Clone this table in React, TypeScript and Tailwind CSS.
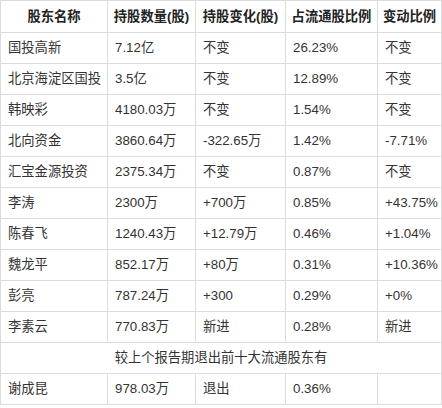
import React from "react";

const rows = [
  ["国投高新", "7.12亿", "不变", "26.23%", "不变"],
  ["北京海淀区国投", "3.5亿", "不变", "12.89%", "不变"],
  ["韩映彩", "4180.03万", "不变", "1.54%", "不变"],
  ["北向资金", "3860.64万", "-322.65万", "1.42%", "-7.71%"],
  ["汇宝金源投资", "2375.34万", "不变", "0.87%", "不变"],
  ["李涛", "2300万", "+700万", "0.85%", "+43.75%"],
  ["陈春飞", "1240.43万", "+12.79万", "0.46%", "+1.04%"],
  ["魏龙平", "852.17万", "+80万", "0.31%", "+10.36%"],
  ["彭亮", "787.24万", "+300", "0.29%", "+0%"],
  ["李素云", "770.83万", "新进", "0.28%", "新进"],
];

const headers = ["股东名称", "持股数量(股)", "持股变化(股)", "占流通股比例", "变动比例"];
const widths = ["w-[107px]", "w-[88px]", "w-[90px]", "w-[92px]", "w-[64px]"];

export default function App() {
  return (
    <div
      className="w-[442px] h-[408px] bg-white text-[#333] text-[13.3px]"
      style={{ fontFamily: '"Liberation Sans", "Noto Sans CJK SC", sans-serif' }}
    >
      <table className="border-collapse w-[441px] table-fixed">
        <thead>
          <tr className="h-[32px]">
            {headers.map((h, i) => (
              <th
                key={h}
                className={`${widths[i]} border border-[#dcdcdc] font-bold text-center px-0 whitespace-nowrap text-[#222]`}
              >
                {h}
              </th>
            ))}
          </tr>
        </thead>
        <tbody>
          {rows.map((r) => (
            <tr key={r[0]} className="h-[31px]">
              {r.map((c, i) => (
                <td key={i} className="border border-[#dcdcdc] pl-[7px] pr-0 whitespace-nowrap">
                  {c}
                </td>
              ))}
            </tr>
          ))}
          <tr className="h-[31px]">
            <td colSpan={5} className="border border-[#dcdcdc] text-center">
              较上个报告期退出前十大流通股东有
            </td>
          </tr>
          <tr className="h-[31px]">
            {["谢成昆", "978.03万", "退出", "0.36%", ""].map((c, i) => (
              <td key={i} className="border border-[#dcdcdc] pl-[7px] pr-0 whitespace-nowrap">
                {c}
              </td>
            ))}
          </tr>
        </tbody>
      </table>
    </div>
  );
}
